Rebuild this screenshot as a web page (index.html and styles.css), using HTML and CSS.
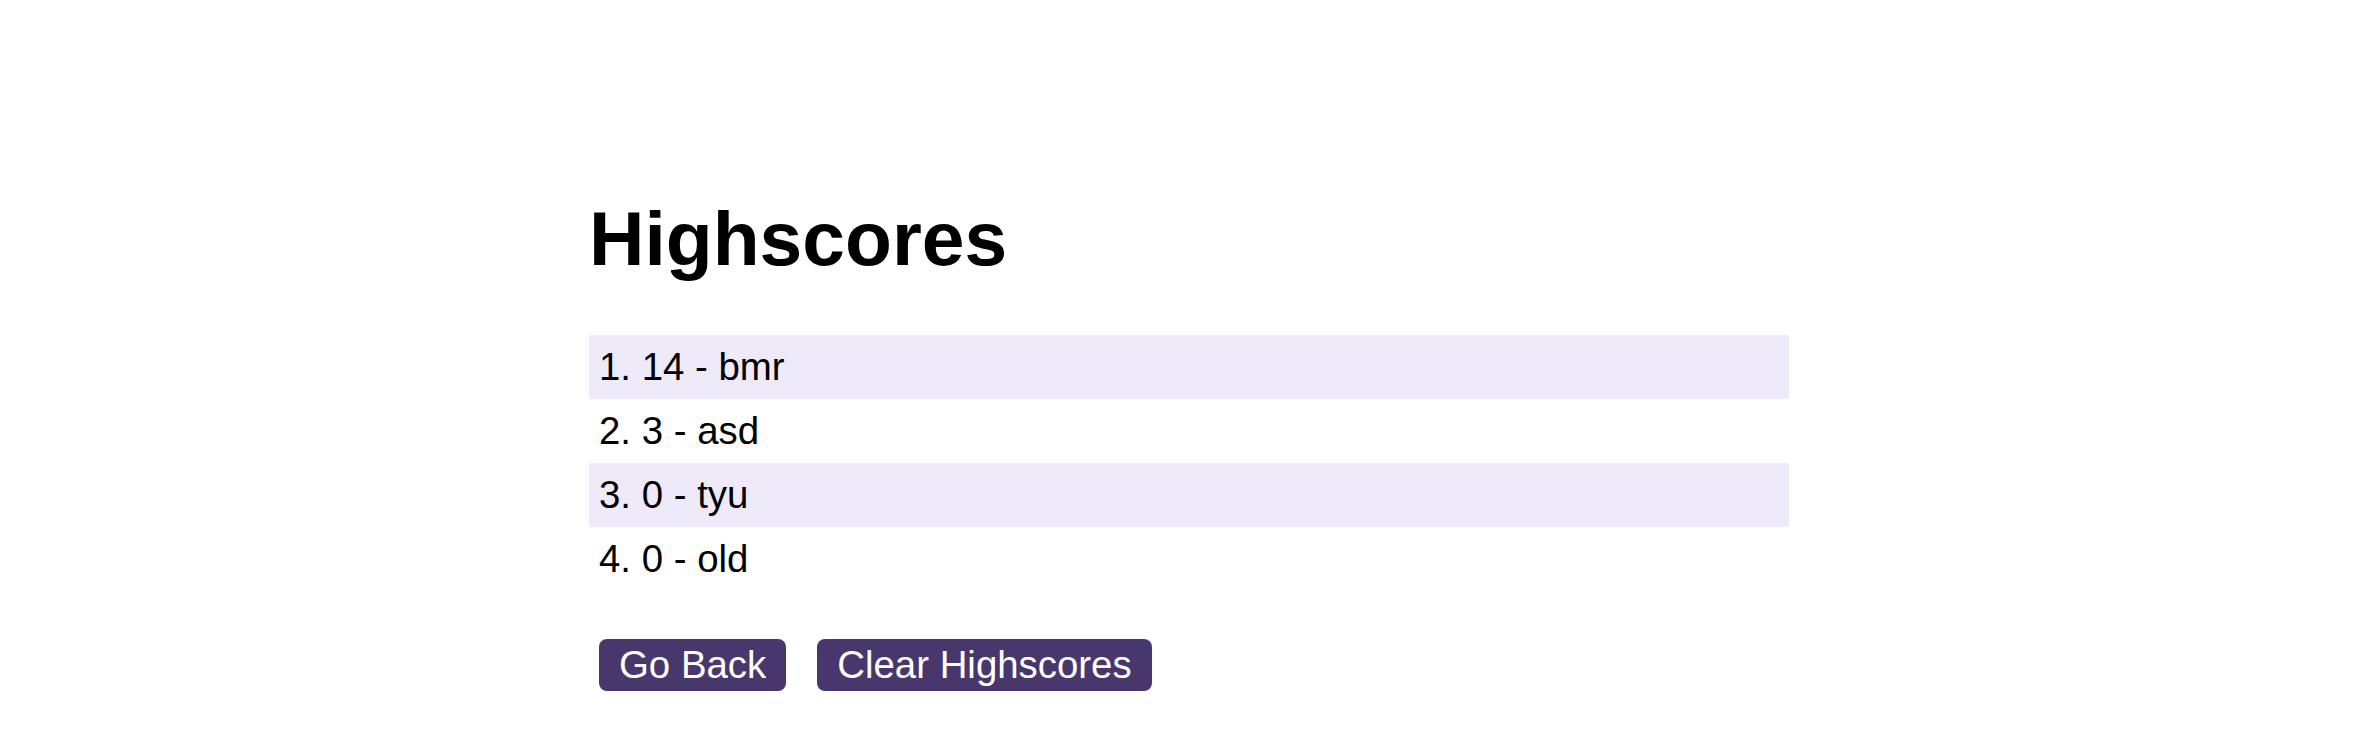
FILE: index.html
```html
<!DOCTYPE html>
<html lang="en">
<head>
<meta charset="utf-8">
<title>Highscores</title>
<link rel="stylesheet" href="styles.css">
</head>
<body>
<main class="page">
  <h1 class="title">Highscores</h1>
  <ol class="scores">
    <li class="score">1. 14 - bmr</li>
    <li class="score">2. 3 - asd</li>
    <li class="score">3. 0 - tyu</li>
    <li class="score">4. 0 - old</li>
  </ol>
  <div class="actions">
    <button class="btn" type="button">Go Back</button>
    <button class="btn" type="button">Clear Highscores</button>
  </div>
</main>
</body>
</html>
```
FILE: styles.css
```css
html, body {
  margin: 0;
  padding: 0;
  background: #ffffff;
}
body {
  font-family: "Liberation Sans", Arial, Helvetica, sans-serif;
  font-size: 38.4px;
  color: #000000;
  padding-left: 4px;
}
.page {
  width: 1200px;
  margin: 0 auto;
  padding-top: 194px;
}
.title {
  font-size: 76.8px;
  font-weight: bold;
  margin: 0 0 51.5px 0;
}
.scores {
  list-style: none;
  margin: 0;
  padding: 0;
}
.score {
  padding: 10px;
}
.score:nth-child(odd) {
  background: #eeeaf9;
}
.actions {
  display: flex;
  gap: 31px;
  margin-top: 48px;
  padding-left: 10px;
}
.btn {
  font-family: "Liberation Sans", Arial, Helvetica, sans-serif;
  font-size: 38.4px;
  line-height: 44px;
  padding: 4px 20px;
  border: none;
  border-radius: 8px;
  background: #48376c;
  color: #ffffff;
  cursor: pointer;
}
```
